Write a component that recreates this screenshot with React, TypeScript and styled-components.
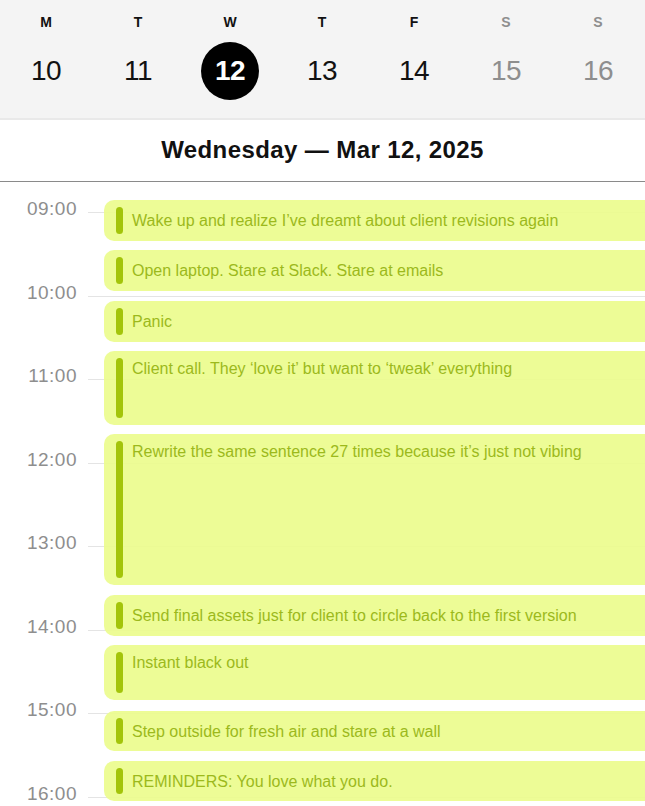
import styled, { createGlobalStyle } from 'styled-components';

const GlobalStyle = createGlobalStyle`
  html, body {
    margin: 0;
    padding: 0;
    background: #ffffff;
  }
  body {
    font-family: "Liberation Sans", Arial, sans-serif;
    -webkit-font-smoothing: antialiased;
    overflow: hidden;
  }
`;

type Day = { letter: string; date: number; weekend?: boolean; selected?: boolean };

const DAYS: Day[] = [
  { letter: 'M', date: 10 },
  { letter: 'T', date: 11 },
  { letter: 'W', date: 12, selected: true },
  { letter: 'T', date: 13 },
  { letter: 'F', date: 14 },
  { letter: 'S', date: 15, weekend: true },
  { letter: 'S', date: 16, weekend: true },
];

const HOURS = ['09:00', '10:00', '11:00', '12:00', '13:00', '14:00', '15:00', '16:00'];

// gap = space above the block, height = block height (px)
type CalEvent = { title: string; gap: number; height: number };

const EVENTS: CalEvent[] = [
  { title: 'Wake up and realize I’ve dreamt about client revisions again', gap: 18, height: 41 },
  { title: 'Open laptop. Stare at Slack. Stare at emails', gap: 9, height: 41 },
  { title: 'Panic', gap: 10, height: 41 },
  { title: 'Client call. They ‘love it’ but want to ‘tweak’ everything', gap: 9, height: 74 },
  { title: 'Rewrite the same sentence 27 times because it’s just not vibing', gap: 9, height: 151 },
  { title: 'Send final assets just for client to circle back to the first version', gap: 10, height: 41 },
  { title: 'Instant black out', gap: 9, height: 55 },
  { title: 'Step outside for fresh air and stare at a wall', gap: 11, height: 40 },
  { title: 'REMINDERS: You love what you do.', gap: 10, height: 40 },
];

const Screen = styled.div`
  width: 645px;
  height: 806px;
  overflow: hidden;
  display: flex;
  flex-direction: column;
`;

const WeekStrip = styled.div`
  flex-shrink: 0;
  background: #f4f4f4;
  border-bottom: 2px solid #e9e9e9;
  display: grid;
  grid-template-columns: repeat(7, 92px);
  padding: 13px 0 18px;
`;

const DayCell = styled.div`
  display: flex;
  flex-direction: column;
  align-items: center;
`;

const DayLetter = styled.span<{ $muted?: boolean }>`
  font-size: 14px;
  line-height: 18px;
  font-weight: 700;
  color: ${(p) => (p.$muted ? '#8e8e8e' : '#111111')};
`;

const DayNumber = styled.span<{ $muted?: boolean; $selected?: boolean }>`
  margin-top: 11px;
  width: 58px;
  height: 58px;
  border-radius: 50%;
  display: flex;
  align-items: center;
  justify-content: center;
  font-size: 28px;
  letter-spacing: -0.5px;
  font-weight: ${(p) => (p.$selected ? 700 : 400)};
  background: ${(p) => (p.$selected ? '#000000' : 'transparent')};
  color: ${(p) => (p.$selected ? '#ffffff' : p.$muted ? '#8e8e8e' : '#111111')};
`;

const DateTitle = styled.div`
  flex-shrink: 0;
  height: 62px;
  display: flex;
  align-items: center;
  justify-content: center;
  padding-bottom: 2px;
  box-sizing: border-box;
  font-size: 24px;
  letter-spacing: 0.4px;
  font-weight: 700;
  color: #111111;
  border-bottom: 1px solid #8a8a8a;
`;

const Timeline = styled.div`
  flex: 1;
  display: grid;
  grid-template-columns: 1fr;
  grid-template-rows: 1fr;
`;

const HourGrid = styled.div`
  grid-area: 1 / 1;
  padding-top: 17px;
  display: flex;
  flex-direction: column;
`;

const HourRow = styled.div`
  height: 83.5px;
  display: flex;
  align-items: flex-start;
  flex-shrink: 0;
`;

const HourLabel = styled.span`
  width: 77px;
  text-align: right;
  font-size: 19px;
  letter-spacing: 0.5px;
  line-height: 20px;
  color: #8e8e8e;
`;

const HourLine = styled.div`
  flex: 1;
  height: 1px;
  margin: 13px 0 0 11px;
  background: #e4e4e4;
`;

const EventList = styled.div`
  grid-area: 1 / 1;
  display: flex;
  flex-direction: column;
  padding-left: 104px;
  z-index: 1;
`;

const EventBlock = styled.div<{ $gap: number; $height: number }>`
  margin-top: ${(p) => p.$gap}px;
  height: ${(p) => p.$height}px;
  flex-shrink: 0;
  display: flex;
  align-items: stretch;
  box-sizing: border-box;
  padding: 7px 0 7px 12px;
  border-radius: 10px 0 0 10px;
  background: rgba(236, 252, 142, 0.93);
`;

const EventBar = styled.div`
  width: 7px;
  border-radius: 4px;
  background: #a3c40a;
  flex-shrink: 0;
`;

const EventTitle = styled.span<{ $tall: boolean }>`
  margin-left: 9px;
  padding-top: ${(p) => (p.$tall ? 1 : 4)}px;
  font-size: 16px;
  line-height: 20px;
  color: #9cb91c;
  white-space: nowrap;
`;

export default function App() {
  return (
    <>
      <GlobalStyle />
      <Screen>
        <WeekStrip>
          {DAYS.map((d) => (
            <DayCell key={d.date}>
              <DayLetter $muted={d.weekend}>{d.letter}</DayLetter>
              <DayNumber $muted={d.weekend} $selected={d.selected}>
                {d.date}
              </DayNumber>
            </DayCell>
          ))}
        </WeekStrip>
        <DateTitle>Wednesday — Mar 12, 2025</DateTitle>
        <Timeline>
          <HourGrid>
            {HOURS.map((h) => (
              <HourRow key={h}>
                <HourLabel>{h}</HourLabel>
                <HourLine />
              </HourRow>
            ))}
          </HourGrid>
          <EventList>
            {EVENTS.map((e) => (
              <EventBlock key={e.title} $gap={e.gap} $height={e.height}>
                <EventBar />
                <EventTitle $tall={e.height > 45}>{e.title}</EventTitle>
              </EventBlock>
            ))}
          </EventList>
        </Timeline>
      </Screen>
    </>
  );
}
